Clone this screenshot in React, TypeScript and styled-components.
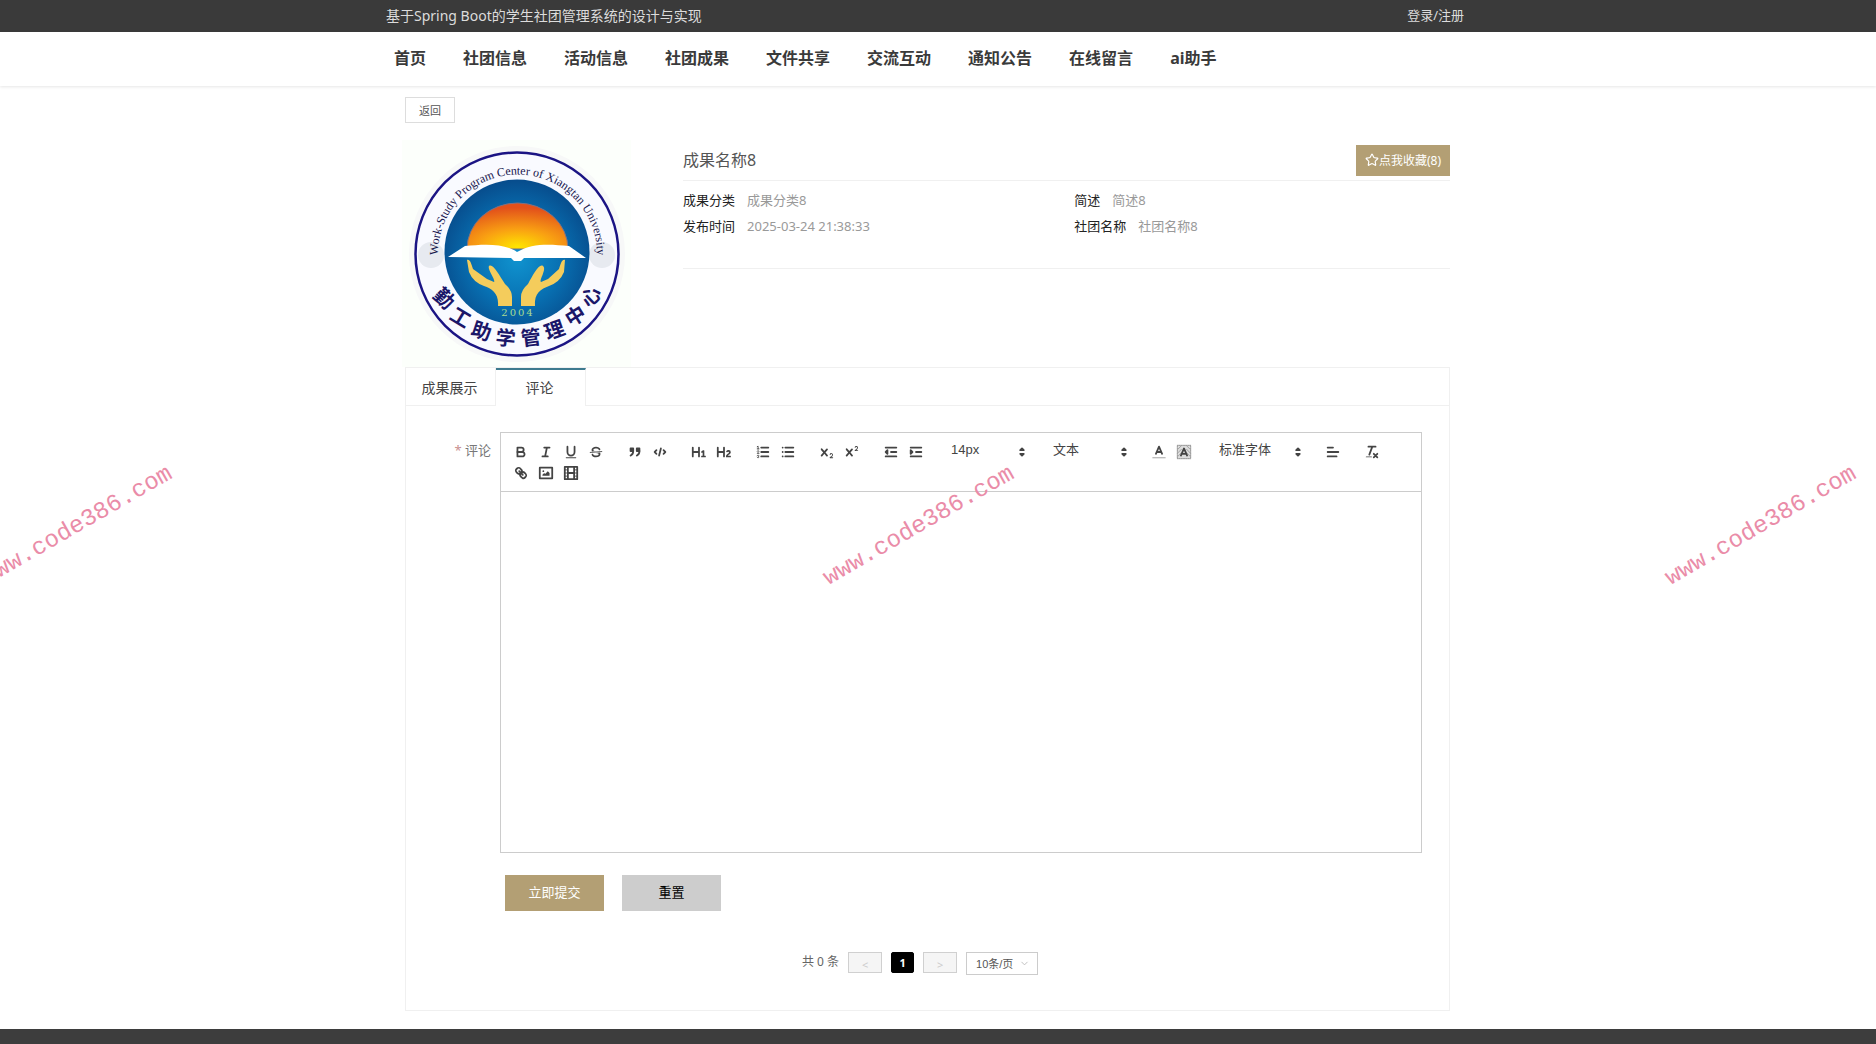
import React, { useState } from 'react';
import styled, { createGlobalStyle, css } from 'styled-components';
import { ChevronDown, Star } from 'lucide-react';

const GlobalStyle = createGlobalStyle`
  *, *::before, *::after { box-sizing: border-box; }
  body {
    margin: 0;
    background: #fff;
    color: #3a3a3a;
    font-family: "Noto Sans", "Noto Sans CJK SC", sans-serif;
    font-size: 13px;
  }
  button, select, textarea { font-family: inherit; margin: 0; }
  a { color: inherit; text-decoration: none; }
`;

const Page = styled.div`
  position: relative;
  overflow: hidden;
  min-height: 100vh;
  display: flex;
  flex-direction: column;
`;

const Bar = styled.header`
  background: #3a3a3a;
  color: #dcdcdc;
  padding-right: 21px;
`;

const BarInner = styled.div`
  max-width: 1083px;
  height: 32px;
  margin: 0 auto;
  padding-right: 5px;
  display: flex;
  align-items: center;
  justify-content: space-between;
`;

const SiteName = styled.span`
  font-size: 14px;
  line-height: 20px;
`;

const LoginLink = styled.a`
  font-size: 13px;
  line-height: 20px;
  padding-bottom: 2px;
`;

const Nav = styled.nav`
  padding-right: 21px;
  box-shadow: 0 1px 3px rgba(0, 0, 0, 0.1);
`;

const NavList = styled.ul`
  max-width: 1083px;
  height: 54px;
  margin: 0 auto;
  padding: 0 8px 2px;
  display: flex;
  align-items: center;
  gap: 37px;
  list-style: none;
  font-size: 16px;
  font-weight: 700;
  line-height: 24px;
  white-space: nowrap;
`;

const Main = styled.main`
  flex: 1;
  padding: 11px 21px 18px 0;
`;

const Content = styled.div`
  max-width: 1045px;
  margin: 0 auto;
`;

const BackButton = styled.button`
  display: block;
  width: 50px;
  height: 26px;
  padding: 0 0 1px;
  border: 1px solid #ddd;
  background: #fff;
  color: #555;
  font-size: 11px;
`;

const Detail = styled.section`
  display: flex;
  gap: 52px;
  margin: 17px 0 0 -3px;
`;

const Carousel = styled.div`
  position: relative;
  flex: none;
  width: 229px;
  height: 227px;
`;

const CarouselArrow = styled.button<{ $side: 'left' | 'right' }>`
  position: absolute;
  top: 102px;
  ${(p) => p.$side}: 16px;
  width: 26px;
  height: 26px;
  padding: 0;
  border: 0;
  border-radius: 50%;
  background: rgba(31, 45, 61, 0.08);
`;

const Info = styled.div`
  flex: 1;
`;

const TitleRow = styled.div`
  display: flex;
  align-items: center;
  justify-content: space-between;
  height: 41px;
  border-bottom: 1px solid #f0f0f0;
`;

const Title = styled.h1`
  margin: 0;
  font-size: 16px;
  font-weight: 400;
  line-height: 24px;
  color: #555;
`;

const FavButton = styled.button`
  display: flex;
  align-items: center;
  justify-content: center;
  width: 94px;
  height: 31px;
  padding: 0;
  border: 0;
  background: #b39f74;
  color: #fff;
  font-size: 12px;
`;

const MetaList = styled.dl`
  display: grid;
  grid-template-columns: 51% 49%;
  height: 88px;
  margin: 0;
  padding-top: 6px;
  align-content: start;
  border-bottom: 1px solid #f0f0f0;
`;

const Meta = styled.div`
  display: flex;
  gap: 12px;
  line-height: 26px;

  dt { color: #222; }
  dd { margin: 0; color: #999; }
`;

const Panel = styled.section`
  border: 1px solid #f0f0f0;
`;

const Tabs = styled.div`
  display: flex;
  height: 38px;
  border-bottom: 1px solid #f0f0f0;
`;

const Tab = styled.button<{ $active: boolean }>`
  width: 90px;
  padding: 0 2px 0 0;
  border: 0;
  border-right: 1px solid #f0f0f0;
  background: #fff;
  color: #444;
  font-size: 14px;
  ${(p) =>
    p.$active &&
    css`
      height: 38px;
      padding-bottom: 2px;
      border-top: 2px solid #3d7a8e;
    `}
`;

const Form = styled.form`
  padding: 26px 27px 0 0;
`;

const Field = styled.div`
  display: flex;
  gap: 9px;
`;

const Label = styled.label`
  flex: none;
  width: 85px;
  padding-top: 7px;
  text-align: right;
  line-height: 22px;
  color: #777;

  span { color: #c9908f; }
`;

const Editor = styled.div`
  flex: 1;
  border: 1px solid #ccc;
`;

const Toolbar = styled.div`
  display: flex;
  flex-wrap: wrap;
  column-gap: 14px;
  padding: 8px 7px;
  border-bottom: 1px solid #ccc;
`;

const Group = styled.div`
  display: flex;
`;

const ToolButton = styled.button`
  display: flex;
  align-items: center;
  justify-content: center;
  width: 25px;
  height: 21px;
  padding: 0;
  border: 0;
  background: none;
`;

const ToolIcon = styled.svg`
  width: 16px;
  height: 16px;
  fill: none;
  stroke: #444;
  stroke-width: 2;
  stroke-linecap: round;
  stroke-linejoin: round;

  .thin { stroke-width: 1; }
  .fill { fill: #444; stroke: none; }
  .both { fill: #444; }
  .faint { stroke: #999; stroke-width: 1; }
`;

const Picker = styled.div<{ $width: number }>`
  display: flex;
  align-items: center;
  width: ${(p) => p.$width}px;
  height: 21px;

  svg { flex: none; }
`;

const PickerSelect = styled.select`
  flex: 1;
  min-width: 0;
  height: 21px;
  padding: 0 0 4px 9px;
  border: 0;
  appearance: none;
  background: none;
  color: #444;
  font-family: "Liberation Sans", "Noto Sans CJK SC", sans-serif;
  font-size: 13px;
`;

const TextArea = styled.textarea`
  display: block;
  width: 100%;
  height: 360px;
  padding: 12px 15px;
  border: 0;
  outline: 0;
  resize: none;
  background: none;
`;

const Actions = styled.div`
  display: flex;
  gap: 18px;
  padding: 22px 0 0 99px;
`;

const ActionButton = styled.button<{ $primary?: boolean }>`
  width: 99px;
  height: 36px;
  padding: 0 0 3px;
  border: 0;
  background: ${(p) => (p.$primary ? '#b39f74' : '#cdcdcd')};
  color: ${(p) => (p.$primary ? '#fff' : '#000')};
  font-size: 13px;
`;

const Pagination = styled.div`
  display: flex;
  justify-content: center;
  align-items: flex-start;
  gap: 9px;
  padding: 41px 15px 35px 0;
  color: #666;
  font-size: 12px;
  line-height: 20px;
`;

const PageButton = styled.button<{ $current?: boolean }>`
  width: ${(p) => (p.$current ? 23 : 34)}px;
  height: 21px;
  padding: ${(p) => (p.$current ? '0' : '4px 0 0')};
  border: 1px solid ${(p) => (p.$current ? '#000' : '#d0d0d0')};
  border-radius: ${(p) => (p.$current ? 2 : 0)}px;
  background: ${(p) => (p.$current ? '#000' : '#f5f5f5')};
  color: ${(p) => (p.$current ? '#fff' : '#ccc')};
  font-size: 11px;
  font-weight: ${(p) => (p.$current ? 700 : 400)};
  line-height: 16px;
`;

const PageSize = styled.div`
  display: flex;
  align-items: center;
  width: 72px;
  height: 23px;
  padding-right: 7px;
  border: 1px solid #ccc;
  color: #bbb;
`;

const PageSizeSelect = styled.select`
  flex: 1;
  min-width: 0;
  height: 21px;
  padding: 0 0 0 9px;
  border: 0;
  appearance: none;
  background: none;
  color: #555;
  font-family: "Liberation Sans", "Noto Sans CJK SC", sans-serif;
  font-size: 11px;
`;

const Footer = styled.footer`
  min-height: 16px;
  background: #3d3d3d;
`;

const WatermarkLayer = styled.div`
  position: absolute;
  inset: 0;
  overflow: hidden;
  pointer-events: none;
`;

const Watermark = styled.span`
  position: absolute;
  top: 526px;
  transform: translate(-50%, -50%) rotate(-30deg);
  color: #ea8ca8;
  font-family: "Liberation Mono", monospace;
  font-size: 24px;
  line-height: 28px;
  white-space: nowrap;
`;

const CROSS =
  'M9.65,5.241a1,1,0,0,0-1.409.108L6,7.964,3.759,5.349A1,1,0,0,0,2.192,6.59178Q2.21541,6.6213,2.241,6.649L4.684,9.5,2.241,12.35A1,1,0,0,0,3.71,13.70722q0.02557-.02768.049-0.05722L6,11.036,8.241,13.65a1,1,0,1,0,1.567-1.24277Q9.78459,12.3777,9.759,12.35L7.316,9.5,9.759,6.651A1,1,0,0,0,9.65,5.241Z';

const icons: Record<string, React.ReactNode> = {
  加粗: (
    <>
      <path d="M5,4H9.5A2.5,2.5,0,0,1,12,6.5v0A2.5,2.5,0,0,1,9.5,9H5Z" />
      <path d="M5,9h5.5A2.5,2.5,0,0,1,13,11.5v0A2.5,2.5,0,0,1,10.5,14H5Z" />
    </>
  ),
  斜体: <path d="M7,4H13M5,14H11M8,14L10,4" />,
  下划线: (
    <>
      <path d="M5,3V9a4.012,4.012,0,0,0,4,4H9a4.012,4.012,0,0,0,4-4V3" />
      <rect className="fill" height="1" rx="0.5" width="12" x="3" y="15" />
    </>
  ),
  删除线: (
    <>
      <path className="thin" d="M15.5,8.5L2.5,9.5" />
      <path className="fill" d="M9.007,8C6.542,7.791,6,7.519,6,6.5,6,5.792,7.283,5,9,5c1.571,0,2.765.679,2.969,1.309a1,1,0,0,0,1.9-.617C13.356,4.106,11.354,3,9,3,6.2,3,4,4.538,4,6.5a3.2,3.2,0,0,0,.5,1.843Z" />
      <path className="fill" d="M8.984,10C11.457,10.208,12,10.479,12,11.5c0,0.708-1.283,1.5-3,1.5-1.571,0-2.765-.679-2.969-1.309a1,1,0,1,0-1.9.617C4.644,13.894,6.646,15,9,15c2.8,0,5-1.538,5-3.5a3.2,3.2,0,0,0-.5-1.843Z" />
    </>
  ),
  引用: (
    <>
      <rect className="both" height="3" width="3" x="4" y="5" />
      <rect className="both" height="3" width="3" x="11" y="5" />
      <path d="M7,8c0,4.031-3,5-3,5M14,8c0,4.031-3,5-3,5" />
    </>
  ),
  代码: <path d="M5,7L3,9L5,11M13,7L15,9L13,11M10,5L8,13" />,
  标题1: (
    <path className="fill" d="M10,4V14a1,1,0,0,1-2,0V10H3v4a1,1,0,0,1-2,0V4A1,1,0,0,1,3,4V8H8V4a1,1,0,0,1,2,0Zm6.06787,9.209H14.98975V7.59863a.54085.54085,0,0,0-.605-.60547h-.62744a1.01119,1.01119,0,0,0-.748.29688L11.645,8.56641a.5435.5435,0,0,0-.022.8584l.28613.30762a.53861.53861,0,0,0,.84717.0332l.09912-.08789a1.2137,1.2137,0,0,0,.2417-.35254h.02246s-.01123.30859-.01123.60547V13.209H12.041a.54085.54085,0,0,0-.605.60547v.43945a.54085.54085,0,0,0,.605.60547h4.02686a.54085.54085,0,0,0,.605-.60547v-.43945A.54085.54085,0,0,0,16.06787,13.209Z" />
  ),
  标题2: (
    <path className="fill" d="M16.73975,13.81445v.43945a.54085.54085,0,0,1-.605.60547H11.855a.58392.58392,0,0,1-.64893-.60547V14.0127c0-2.90527,3.39941-3.42187,3.39941-4.55469a.77675.77675,0,0,0-.84717-.78125,1.17684,1.17684,0,0,0-.83594.38477c-.2749.26367-.561.374-.85791.13184l-.4292-.34082c-.30811-.24219-.38525-.51758-.1543-.81445a2.97155,2.97155,0,0,1,2.45361-1.17676,2.45393,2.45393,0,0,1,2.68408,2.40918c0,2.45312-3.1792,2.92676-3.27832,3.93848h2.79443A.54085.54085,0,0,1,16.73975,13.81445ZM9,3A.99974.99974,0,0,0,8,4V8H3V4A1,1,0,0,0,1,4V14a1,1,0,0,0,2,0V10H8v4a1,1,0,0,0,2,0V4A.99974.99974,0,0,0,9,3Z" />
  ),
  有序列表: (
    <>
      <path d="M7,4H15M7,9H15M7,14H15" />
      <path className="thin" d="M2.5,5.5H4.5M2.5,3L3.5,2.5V5.5M4.5,10.5h-2c0-.234,1.85-1.076,1.85-2.234A0.959,0.959,0,0,0,2.5,8.156M2.5,14.846a0.959,0.959,0,0,0,1.85-.11A0.7,0.7,0,0,0,3.75,14a0.688,0.688,0,0,0,.6-0.736,0.959,0.959,0,0,0-1.85-.109" />
    </>
  ),
  无序列表: <path d="M6,4H15M6,9H15M6,14H15M3,4H3M3,9H3M3,14H3" />,
  下标: (
    <>
      <path className="fill" d="M15.5,15H13.861a3.858,3.858,0,0,0,1.914-2.975,1.8,1.8,0,0,0-1.6-1.751A1.921,1.921,0,0,0,12.021,11.7a0.50013,0.50013,0,1,0,.957.291h0a0.914,0.914,0,0,1,1.053-.725,0.81,0.81,0,0,1,.744.762c0,1.076-1.16971,1.86982-1.93971,2.43082A1.45639,1.45639,0,0,0,12,15.5a0.5,0.5,0,0,0,.5.5h3A0.5,0.5,0,0,0,15.5,15Z" />
      <path className="fill" d={CROSS} />
    </>
  ),
  上标: (
    <>
      <path className="fill" d="M15.5,7H13.861a4.015,4.015,0,0,0,1.914-2.975,1.8,1.8,0,0,0-1.6-1.751A1.922,1.922,0,0,0,12.021,3.7a0.5,0.5,0,1,0,.957.291,0.917,0.917,0,0,1,1.053-.725,0.81,0.81,0,0,1,.744.762c0,1.077-1.164,1.925-1.934,2.486A1.423,1.423,0,0,0,12,7.5a0.5,0.5,0,0,0,.5.5h3A0.5,0.5,0,0,0,15.5,7Z" />
      <path className="fill" d={CROSS} />
    </>
  ),
  减少缩进: (
    <>
      <path d="M3,14H15M3,4H15M9,9H15" />
      <path className="both" d="M5,7V11L3,9Z" />
    </>
  ),
  增加缩进: (
    <>
      <path d="M3,14H15M3,4H15M9,9H15" />
      <path className="both" d="M3,7V11L5,9Z" />
    </>
  ),
  文字颜色: (
    <>
      <path className="faint" d="M2,15.5H16" />
      <path d="M5.5,11L9,3L12.5,11M11.63,9H6.38" />
    </>
  ),
  背景颜色: (
    <>
      <rect x="1.5" y="1.5" width="15" height="15" fill="#ddd" stroke="#888" strokeWidth="1" strokeDasharray="1 1" />
      <path className="faint" d="M2,6L6,2M2,10L6,6M2,14L6,10M12,2L16,6M12,6L16,10M12,10L16,14" />
      <path d="M5.5,13L9,5L12.5,13M11.63,11H6.38" />
    </>
  ),
  对齐: <path d="M3,9H15M3,14H13M3,4H9" />,
  清除格式: (
    <>
      <path d="M5,3H13M6,12L9.35,3M11,11L15,15M15,11L11,15" />
      <rect className="fill" height="1" rx="0.5" width="7" x="2" y="14" />
    </>
  ),
  链接: (
    <>
      <path d="M7,7L11,11" />
      <path d="M8.9,4.577a3.476,3.476,0,0,1,.36,4.679A3.476,3.476,0,0,1,4.577,8.9C3.185,7.5,2.035,6.4,4.217,4.217S7.5,3.185,8.9,4.577Z" />
      <path d="M13.423,9.1a3.476,3.476,0,0,0-4.679-.36,3.476,3.476,0,0,0,.36,4.679c1.392,1.392,2.5,2.542,4.679.36S14.815,10.5,13.423,9.1Z" />
    </>
  ),
  图片: (
    <>
      <rect height="12" width="14" x="2" y="3" />
      <circle className="fill" cx="6" cy="7" r="1" />
      <path className="fill" d="M5,12V11L7,9L8,10L11,7L13,9V12Z" />
    </>
  ),
  视频: (
    <>
      <rect height="14" width="14" x="2" y="2" />
      <path d="M5.5,2V16M12.5,2V16M5.5,9H12.5" />
      <path className="thin" d="M2,5.5H5M2,9H5M2,12.5H5M13,5.5H16M13,9H16M13,12.5H16" />
    </>
  ),
};

function Tools({ names }: { names: string[] }) {
  return (
    <Group>
      {names.map((name) => (
        <ToolButton key={name} type="button" aria-label={name}>
          <ToolIcon viewBox="0 0 18 18">{icons[name]}</ToolIcon>
        </ToolButton>
      ))}
    </Group>
  );
}

function ToolPicker({ label, value, width }: { label: string; value: string; width: number }) {
  return (
    <Picker $width={width}>
      <PickerSelect aria-label={label}>
        <option>{value}</option>
      </PickerSelect>
      <ToolIcon viewBox="0 0 18 18">
        <path className="both" d="M7,11L9,13L11,11ZM7,7L9,5L11,7Z" />
      </ToolIcon>
    </Picker>
  );
}

const RING_TEXT = '勤工助学管理中心';

function Emblem() {
  return (
    <svg width="229" height="227" viewBox="0 0 229 227" role="img" aria-label="勤工助学管理中心">
      <defs>
        <radialGradient id="sky" cx="50%" cy="55%" r="55%">
          <stop offset="0" stopColor="#1093cf" />
          <stop offset="0.55" stopColor="#0870b2" />
          <stop offset="1" stopColor="#074c8c" />
        </radialGradient>
        <radialGradient id="sun" cx="50%" cy="95%" r="85%">
          <stop offset="0" stopColor="#ffe500" />
          <stop offset="0.45" stopColor="#f9a012" />
          <stop offset="1" stopColor="#e2501b" />
        </radialGradient>
        <path id="ring" d="M36,114A79.500,79.500,0,0,1,195,114" />
      </defs>
      <rect width="229" height="227" fill="#fcfffb" />
      <circle cx="115" cy="114" r="108" fill="#f7f8f8" />
      <circle cx="115" cy="114" r="101.500" fill="#f9faff" stroke="#1b1484" strokeWidth="2.500" />
      <circle cx="115" cy="112" r="72.500" fill="url(#sky)" />
      <path d="M65,109A50.500,46,0,0,1,166,109Z" fill="url(#sun)" stroke="#7f7183" strokeWidth="1" />
      <path d="M46,117L63,106C82,104,102,103,115,112C130,103,147,104,167,106L184,118H122L119,121H112L109,118Z" fill="#fff" />
      <path d="M65,120C68,119,69,123,71,129L85,139L92,142C94,140,85,129,87,126C91,123,97,135,103,144Q110,150,110,157V166H96C97,153,90,149,82,146Q71,142,67,132Z" fill="#f4cc5c" />
      <path d="M163,120C160,119,159,123,157,129L146,139L139,142C137,140,145,129,141,126C137,123,131,135,126,144Q119,150,119,157V166H133C132,153,139,149,147,146Q158,142,162,132Z" fill="#f4cc5c" />
      <text x="116" y="176" textAnchor="middle" fontFamily="DejaVu Serif, serif" fontSize="10" letterSpacing="2" fill="#a9dc91">
        2004
      </text>
      <text fontFamily="Liberation Serif, serif" fontSize="12" fill="#17154d">
        <textPath href="#ring" startOffset="50%" textAnchor="middle">
          Work-Study Program Center of Xiangtan University
        </textPath>
      </text>
      {RING_TEXT.split('').map((char, i) => {
        const degrees = 148 - i * 16.8;
        const a = (degrees * Math.PI) / 180;
        return (
          <text
            key={char}
            transform={`translate(${115 + 86 * Math.cos(a)} ${113 + 86 * Math.sin(a)}) rotate(${(degrees - 90) * 0.75})`}
            y="7"
            textAnchor="middle"
            fontFamily="Noto Sans CJK SC, sans-serif"
            fontSize="20"
            fontWeight="700"
            fill="#1b1669"
          >
            {char}
          </text>
        );
      })}
    </svg>
  );
}

const navItems = ['首页', '社团信息', '活动信息', '社团成果', '文件共享', '交流互动', '通知公告', '在线留言', 'ai助手'];

const metas = [
  ['成果分类', '成果分类8'],
  ['简述', '简述8'],
  ['发布时间', '2025-03-24 21:38:33'],
  ['社团名称', '社团名称8'],
];

const tabs = ['成果展示', '评论'];
const watermarkCenters = [77, 919, 1761];

export default function App() {
  const [active, setActive] = useState('评论');

  return (
    <Page>
      <GlobalStyle />
      <Bar>
        <BarInner>
          <SiteName>基于Spring Boot的学生社团管理系统的设计与实现</SiteName>
          <LoginLink href="#login">登录/注册</LoginLink>
        </BarInner>
      </Bar>
      <Nav>
        <NavList>
          {navItems.map((item) => (
            <li key={item}>
              <a href="#nav">{item}</a>
            </li>
          ))}
        </NavList>
      </Nav>
      <Main>
        <Content>
          <BackButton type="button">返回</BackButton>
          <Detail>
            <Carousel>
              <Emblem />
              <CarouselArrow type="button" $side="left" aria-label="上一张" />
              <CarouselArrow type="button" $side="right" aria-label="下一张" />
            </Carousel>
            <Info>
              <TitleRow>
                <Title>成果名称8</Title>
                <FavButton type="button">
                  <Star size={14} />
                  点我收藏(8)
                </FavButton>
              </TitleRow>
              <MetaList>
                {metas.map(([name, value]) => (
                  <Meta key={name}>
                    <dt>{name}</dt>
                    <dd>{value}</dd>
                  </Meta>
                ))}
              </MetaList>
            </Info>
          </Detail>
          <Panel>
            <Tabs role="tablist">
              {tabs.map((tab) => (
                <Tab
                  key={tab}
                  type="button"
                  role="tab"
                  aria-selected={tab === active}
                  $active={tab === active}
                  onClick={() => setActive(tab)}
                >
                  {tab}
                </Tab>
              ))}
            </Tabs>
            <Form onSubmit={(e) => e.preventDefault()}>
              <Field>
                <Label htmlFor="comment">
                  <span>*</span> 评论
                </Label>
                <Editor>
                  <Toolbar>
                    <Tools names={['加粗', '斜体', '下划线', '删除线']} />
                    <Tools names={['引用', '代码']} />
                    <Tools names={['标题1', '标题2']} />
                    <Tools names={['有序列表', '无序列表']} />
                    <Tools names={['下标', '上标']} />
                    <Tools names={['减少缩进', '增加缩进']} />
                    <ToolPicker label="字号" value="14px" width={88} />
                    <ToolPicker label="标题" value="文本" width={88} />
                    <Tools names={['文字颜色', '背景颜色']} />
                    <ToolPicker label="字体" value="标准字体" width={96} />
                    <Tools names={['对齐']} />
                    <Tools names={['清除格式']} />
                    <Tools names={['链接', '图片', '视频']} />
                  </Toolbar>
                  <TextArea id="comment" />
                </Editor>
              </Field>
              <Actions>
                <ActionButton type="submit" $primary>
                  立即提交
                </ActionButton>
                <ActionButton type="reset">重置</ActionButton>
              </Actions>
            </Form>
            <Pagination>
              <span>共 0 条</span>
              <PageButton type="button" aria-label="上一页" disabled>
                &lt;
              </PageButton>
              <PageButton type="button" $current>
                1
              </PageButton>
              <PageButton type="button" aria-label="下一页" disabled>
                &gt;
              </PageButton>
              <PageSize>
                <PageSizeSelect aria-label="每页条数">
                  <option>10条/页</option>
                </PageSizeSelect>
                <ChevronDown size={11} />
              </PageSize>
            </Pagination>
          </Panel>
        </Content>
      </Main>
      <Footer />
      <WatermarkLayer aria-hidden="true">
        {watermarkCenters.map((x) => (
          <Watermark key={x} style={{ left: x }}>
            www.code386.com
          </Watermark>
        ))}
      </WatermarkLayer>
    </Page>
  );
}
